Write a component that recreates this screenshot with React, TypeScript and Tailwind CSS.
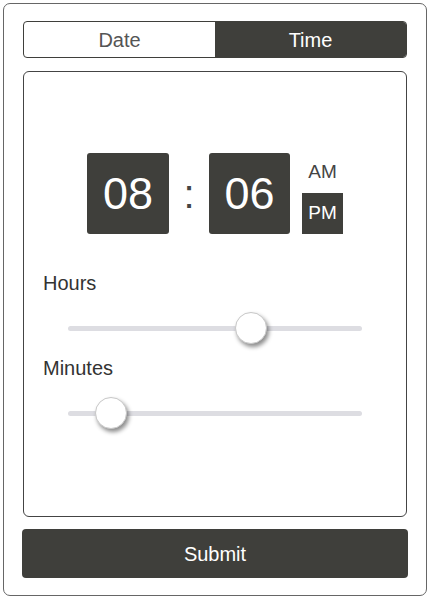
import React from "react";

const Slider = ({ value, min, max }: { value: number; min: number; max: number }) => {
    const pct = (value - min) / (max - min);
    return <div className="relative h-8 mx-[25px]">
        <div className="absolute left-0 right-0 top-[14px] h-[5px] rounded-full bg-[#dddde2]" />
        <div
            className="absolute top-0 w-8 h-8 rounded-full bg-white border border-[#c8c8c8] shadow-[2px_3px_4px_rgba(0,0,0,0.45)]"
            style={{ left: `calc(${pct} * (100% - 32px))` }}
        />
    </div>;
};

const App = () => {
    return <div className="w-[430px] h-[598px] bg-white pt-[3px] pl-[3px] font-['Liberation_Sans',Arial,sans-serif]">
        <div className="w-[424px] h-[593px] border border-[#666] rounded-[7px] px-[19px] pt-[17px] flex flex-col">
            <div className="flex h-[37px] border border-[#3f3f3b] rounded-[4px] overflow-hidden text-[20px]">
                <div className="flex-1 flex items-center justify-center text-[#555]">Date</div>
                <div className="flex-1 flex items-center justify-center bg-[#3f3f3b] text-white">Time</div>
            </div>

            <div className="mt-[13px] h-[446px] border border-[#444] rounded-[6px] pt-[81px] px-[19px]">
                <div className="flex justify-center items-end">
                    <div className="w-[82px] h-[81px] rounded-[3px] bg-[#3f3f3b] text-white text-[45px] flex items-center justify-center">08</div>
                    <div className="w-[40px] text-[#444] text-[40px] flex items-center justify-center h-[81px]">:</div>
                    <div className="w-[81px] h-[81px] rounded-[3px] bg-[#3f3f3b] text-white text-[45px] flex items-center justify-center">06</div>
                    <div className="ml-[12px] flex flex-col items-center w-[41px]">
                        <div className="text-[19px] text-[#444] leading-none mb-[12px]">AM</div>
                        <div className="w-[41px] h-[41px] bg-[#3f3f3b] text-white text-[19px] flex items-center justify-center">PM</div>
                    </div>
                </div>

                <div className="mt-[37px] text-[20px] leading-6 text-[#333]">Hours</div>
                <div className="mt-[17px]">
                    <Slider value={8} min={1} max={12} />
                </div>
                <div className="mt-[12px] text-[20px] leading-6 text-[#333]">Minutes</div>
                <div className="mt-[17px]">
                    <Slider value={6} min={0} max={59} />
                </div>
            </div>

            <div className="mt-[12px] -mx-px h-[49px] rounded-[4px] bg-[#3f3f3b] text-white text-[20px] flex items-center justify-center">
                Submit
            </div>
        </div>
    </div>;
};

export default App;
